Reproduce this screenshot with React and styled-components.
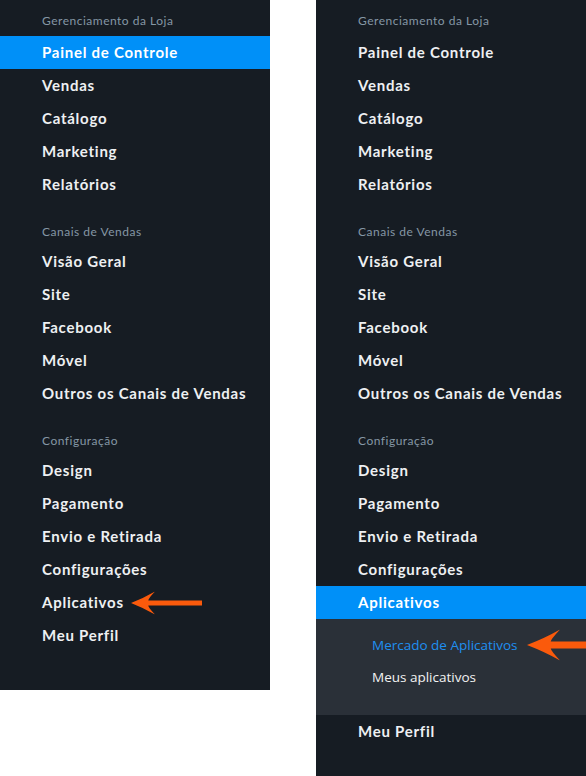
import React from "react";
import styled, { createGlobalStyle } from "styled-components";

const GlobalStyle = createGlobalStyle`
  html, body {
    margin: 0;
    padding: 0;
    background: #ffffff;
  }
  body {
    font-family: "Lato", "Liberation Sans", sans-serif;
  }
`;

const Page = styled.div`
  display: flex;
  align-items: flex-start;
  gap: 46px;
  width: 586px;
  height: 776px;
  overflow: hidden;
`;

const Sidebar = styled.nav`
  width: 270px;
  background: #161c23;
  padding-bottom: ${(p) => (p.$tall ? "80px" : "38px")};
  flex-shrink: 0;
`;

const SectionTitle = styled.div`
  padding: ${(p) => (p.$first ? "14px" : "24px")} 42px
    ${(p) => (p.$first ? "8px" : "6px")};
  height: 14px;
  line-height: 14px;
  font-size: 12px;
  color: #8597a5;
  letter-spacing: 0.5px;
`;

const Item = styled.div`
  position: relative;
  height: 33px;
  line-height: 33px;
  padding-left: 42px;
  font-size: 15px;
  font-weight: 700;
  color: ${(p) => (p.$active ? "#ffffff" : "#eef0f2")};
  background: ${(p) => (p.$active ? "#0090f8" : "transparent")};
  letter-spacing: 0.75px;
`;

const SubMenu = styled.div`
  background: #2a3038;
  padding: 10px 0 22px;
`;

const SubItem = styled.div`
  position: relative;
  height: 32px;
  line-height: 32px;
  padding-left: 56px;
  font-family: "Open Sans", "Liberation Sans", sans-serif;
  font-size: 13.5px;
  color: ${(p) => (p.$active ? "#1f8ff0" : "#f2f2f2")};
`;

const ArrowWrap = styled.svg`
  position: absolute;
  top: 50%;
  transform: translateY(-50%);
  left: ${(p) => p.$left}px;
`;

const Arrow = ({ left, width, head, headH, shaft }) => {
  const c = headH / 2;
  const s = shaft / 2;
  const d = `M0 ${c} Q ${head * 0.55} ${c * 0.55} ${head} 0 Q ${head * 0.72} ${c - s - 2} ${head * 0.72} ${c - s} L ${width} ${c - s} L ${width} ${c + s} L ${head * 0.72} ${c + s} Q ${head * 0.72} ${c + s + 2} ${head} ${headH} Q ${head * 0.55} ${headH - c * 0.55} 0 ${c} Z`;
  return (
    <ArrowWrap $left={left} width={width} height={headH} viewBox={`0 0 ${width} ${headH}`}>
      <path d={d} fill="#fa5a0c" />
    </ArrowWrap>
  );
};

const sections = [
  {
    title: "Gerenciamento da Loja",
    items: ["Painel de Controle", "Vendas", "Catálogo", "Marketing", "Relatórios"],
  },
  {
    title: "Canais de Vendas",
    items: ["Visão Geral", "Site", "Facebook", "Móvel", "Outros os Canais de Vendas"],
  },
  {
    title: "Configuração",
    items: ["Design", "Pagamento", "Envio e Retirada", "Configurações", "Aplicativos", "Meu Perfil"],
  },
];

const Menu = ({ expanded }) => (
  <Sidebar $tall={expanded}>
    {sections.map((section, i) => (
      <React.Fragment key={section.title}>
        <SectionTitle $first={i === 0}>{section.title}</SectionTitle>
        {section.items.map((label) => {
          const isApps = label === "Aplicativos";
          const active = expanded ? isApps : label === "Painel de Controle";
          return (
            <React.Fragment key={label}>
              <Item $active={active}>
                {label}
                {isApps && !expanded && (
                  <Arrow left={131} width={71} head={24} headH={23} shaft={5} />
                )}
              </Item>
              {isApps && expanded && (
                <SubMenu>
                  <SubItem $active>
                    Mercado de Aplicativos
                    <Arrow left={211} width={60} head={33} headH={31} shaft={7} />
                  </SubItem>
                  <SubItem>Meus aplicativos</SubItem>
                </SubMenu>
              )}
            </React.Fragment>
          );
        })}
      </React.Fragment>
    ))}
  </Sidebar>
);

export default function App() {
  return (
    <>
      <GlobalStyle />
      <Page>
        <Menu />
        <Menu expanded />
      </Page>
    </>
  );
}
